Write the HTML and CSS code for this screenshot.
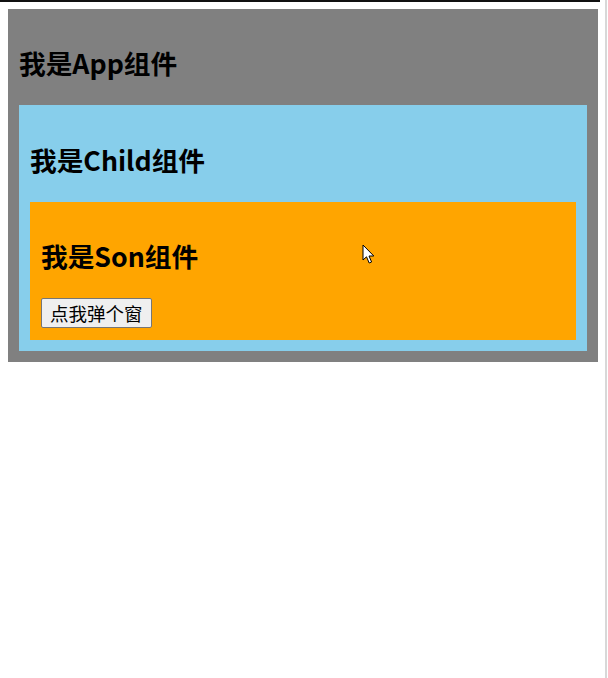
FILE: index.html
```html
<!DOCTYPE html>
<html lang="zh-CN">
<head>
<meta charset="utf-8">
<title>App</title>
<link rel="stylesheet" href="styles.css">
</head>
<body>
<div class="screen">
  <div class="topline"></div>
  <div class="app">
    <h2 class="title">我是App组件</h2>
    <div class="child">
      <h2 class="title">我是Child组件</h2>
      <div class="son">
        <h2 class="title">我是Son组件</h2>
        <button class="btn">点我弹个窗</button>
      </div>
    </div>
  </div>
  <svg class="cursor" width="14" height="21" viewBox="0 0 14 21">
    <path d="M1 1 L1 16 L4.5 12.8 L7.2 19 L9.6 18 L7 12 L11.8 12 Z" fill="#fff" stroke="#000" stroke-width="1" stroke-linejoin="round"/>
  </svg>
</div>
</body>
</html>
```
FILE: styles.css
```css
html, body {
  margin: 0;
  padding: 0;
  background: #fff;
}
body {
  font-family: "Noto Sans CJK SC", "Noto Sans", sans-serif;
  color: #000;
}
.screen {
  position: relative;
  width: 605px;
  height: 678px;
  border-right: 2px solid #d8d8d8;
}
.topline {
  width: 600px;
  height: 2px;
  background: #111;
}
.app {
  margin: 7px 0 0 8px;
  width: 568px;
  padding: 11px;
  background: #808080;
}
.child {
  padding: 12px 11px 11px;
  background: #87ceeb;
}
.son {
  padding: 11px 11px 12px;
  background: #ffa500;
}
.title {
  margin: 25px 0;
  font-size: 26.7px;
  line-height: 35px;
  font-weight: 700;
}
.btn {
  display: block;
  height: 30px;
  margin: 0;
  padding: 0 8px;
  font-family: "Noto Sans CJK SC", sans-serif;
  font-size: 18.5px;
  line-height: 26px;
  color: #000;
  background: #efefef;
  border: 1px solid #767676;
  border-radius: 2px;
}
.cursor {
  position: absolute;
  left: 362px;
  top: 244px;
}
```
